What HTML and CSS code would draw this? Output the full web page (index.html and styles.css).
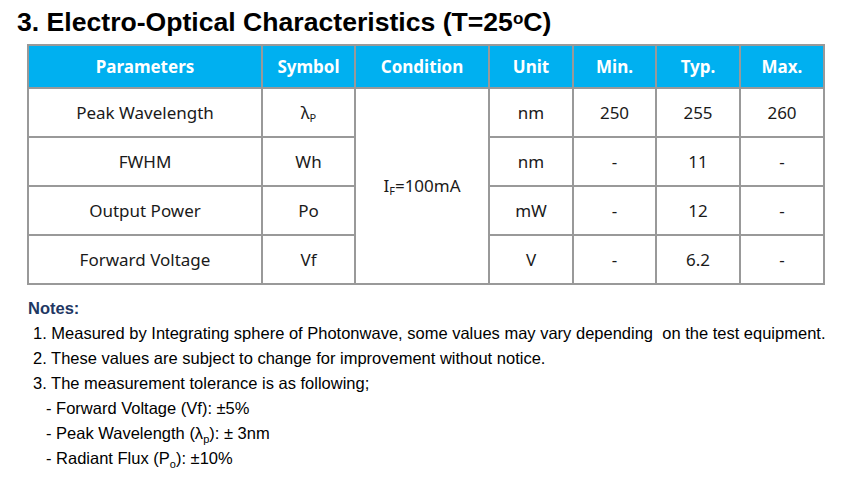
FILE: index.html
```html
<!DOCTYPE html>
<html>
<head>
<meta charset="utf-8">
<link rel="stylesheet" href="styles.css">
</head>
<body>
<div class="page">
  <h1 class="title">3. Electro-Optical Characteristics (T=25<sup>o</sup>C)</h1>
  <table class="spec">
    <colgroup>
      <col class="c1"><col class="c2"><col class="c3"><col class="c4"><col class="c5"><col class="c6"><col class="c7">
    </colgroup>
    <thead>
      <tr><th>Parameters</th><th>Symbol</th><th>Condition</th><th>Unit</th><th>Min.</th><th>Typ.</th><th>Max.</th></tr>
    </thead>
    <tbody>
      <tr><td>Peak Wavelength</td><td>λ<sub class="sm">P</sub></td><td rowspan="4" class="cond">I<sub class="sm">F</sub>=100mA</td><td>nm</td><td>250</td><td>255</td><td>260</td></tr>
      <tr><td>FWHM</td><td>Wh</td><td>nm</td><td>-</td><td>11</td><td>-</td></tr>
      <tr><td>Output Power</td><td>Po</td><td>mW</td><td>-</td><td>12</td><td>-</td></tr>
      <tr><td>Forward Voltage</td><td>Vf</td><td>V</td><td>-</td><td>6.2</td><td>-</td></tr>
    </tbody>
  </table>
  <div class="notes">
    <div class="notes-head">Notes:</div>
    <ol class="note-list">
      <li>1. Measured by Integrating sphere of Photonwave, some values may vary depending&nbsp; on the test equipment.</li>
      <li>2. These values are subject to change for improvement without notice.</li>
      <li>3. The measurement tolerance is as following;</li>
      <li class="sub">- Forward Voltage (Vf): ±5%</li>
      <li class="sub">- Peak Wavelength (λ<sub>p</sub>): ± 3nm</li>
      <li class="sub">- Radiant Flux (P<sub>o</sub>): ±10%</li>
    </ol>
  </div>
</div>
</body>
</html>
```
FILE: styles.css
```css
html, body { margin: 0; padding: 0; background: #fff; }
.page { padding: 6px 0 0 0; }
.title {
  margin: 0 0 0 17px;
  font-family: "Liberation Sans", Arial, sans-serif;
  font-weight: bold;
  font-size: 26.6px;
  line-height: 32px;
  color: #000;
  height: 38px;
}
.title sup { font-size: 17px; vertical-align: 0; position: relative; top: -7px; }
.spec {
  margin-left: 27px;
  border-collapse: collapse;
  table-layout: fixed;
  width: 798px;
  font-family: "Noto Sans", "Open Sans", sans-serif;
  font-size: 17px;
  color: #1a1a1a;
}
.spec col.c1 { width: 234px; }
.spec col.c2 { width: 93px; }
.spec col.c3 { width: 134px; }
.spec col.c4 { width: 84px; }
.spec col.c5 { width: 83px; }
.spec col.c6 { width: 84px; }
.spec col.c7 { width: 84px; }
.spec th, .spec td {
  border: 2px solid #999;
  text-align: center;
  padding: 0;
}
.spec th {
  background: #00b0f0;
  color: #fff;
  font-weight: bold;
  height: 41px;
}
.spec td { height: 47px; }
.spec td.cond { vertical-align: middle; }
.sm { font-size: 11px; vertical-align: -3px; }
.notes {
  font-family: "Liberation Sans", Arial, sans-serif;
  font-size: 16.5px;
  color: #000;
  margin-top: 12px;
}
.notes-head { margin-left: 28px; font-weight: bold; color: #1f3864; line-height: 22px; }
.note-list { list-style: none; margin: 2px 0 0 0; padding: 0 0 0 33px; }
.note-list li { line-height: 25px; }
.note-list li.sub { padding-left: 13px; }
.note-list sub { font-size: 11px; vertical-align: -4px; line-height: 0; }
```
